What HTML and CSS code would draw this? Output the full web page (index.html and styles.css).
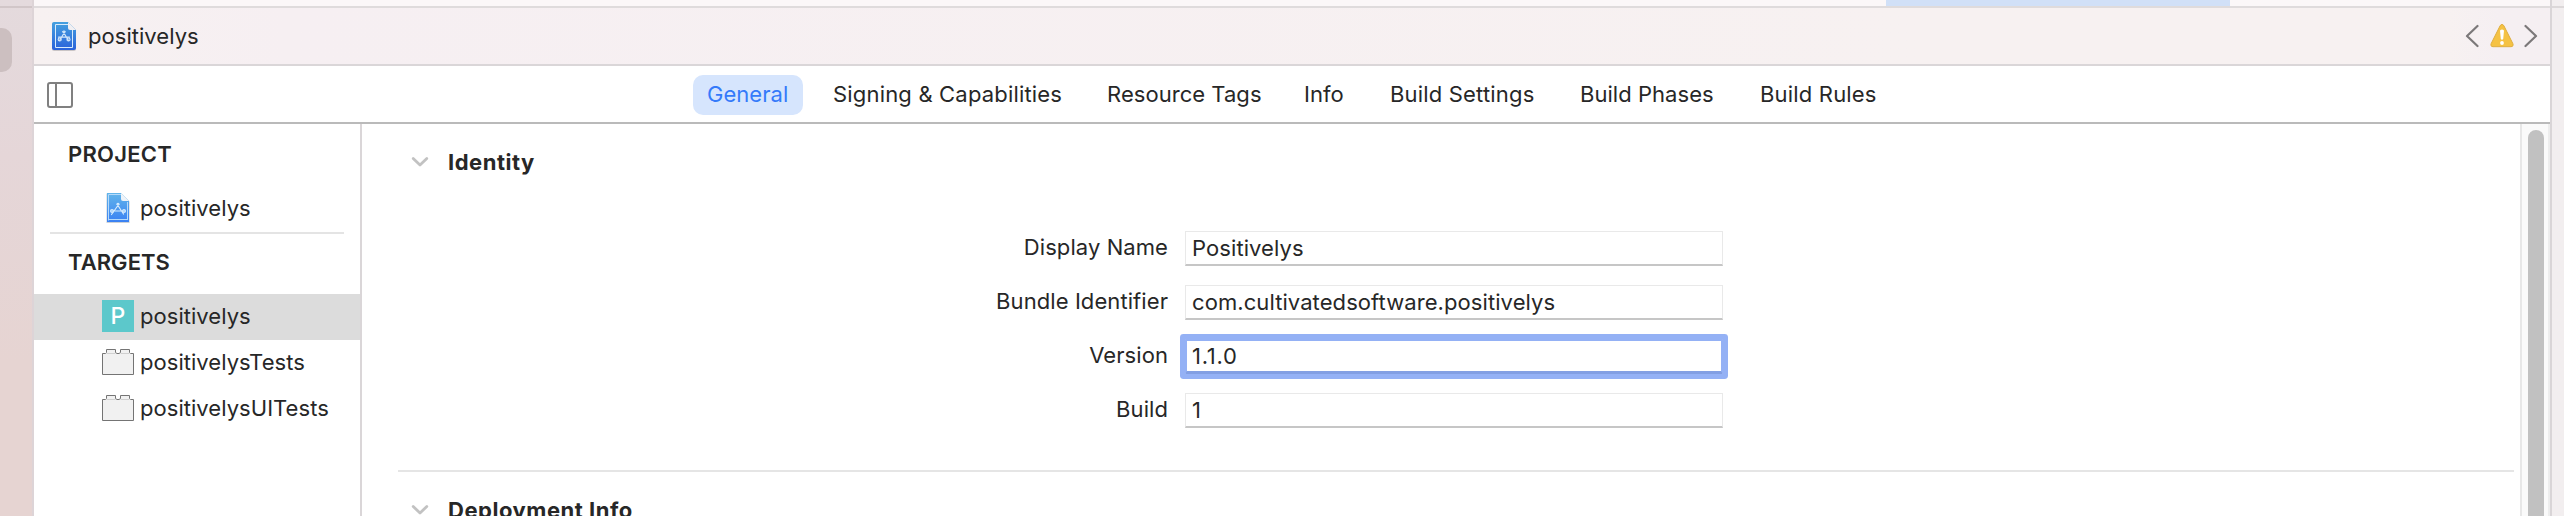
FILE: index.html
```html
<!DOCTYPE html>
<html lang="en">
<head>
<meta charset="utf-8">
<title>positivelys</title>
<link rel="stylesheet" href="styles.css">
</head>
<body>
<div class="window">
  <aside class="edge-left"><div class="edge-cap"></div><div class="edge-nub"></div></aside>
  <main class="editor">
    <div class="file-tabs"><div class="file-tab-active"></div></div>
    <header class="jump-bar">
      <svg class="jump-icon" width="28" height="32" viewBox="0 0 28 32">
        <defs><linearGradient id="docA" x1="0" y1="0" x2="0" y2="1"><stop offset="0" stop-color="#45a0df"/><stop offset="1" stop-color="#2a62da"/></linearGradient></defs>
        <path d="M4 2.6H18L26 10.6V28.5Q26 31 24 31H4Q2 31 2 29V4.600Q2 2.600 4 2.600Z" fill="#000" opacity=".18"/>
        <path d="M4 2H18L26 10V28Q26 30 24 30H4Q2 30 2 28V4Q2 2 4 2Z" fill="url(#docA)"/>
        <path d="M18 2V8Q18 10 20 10H26Z" fill="#f1eff2"/>
        <path d="M18 4.500H5.500V27.500H22.500V10" fill="none" stroke="#d8ebfb" stroke-width="1"/>
        <g fill="none" stroke="#d3e7fa" stroke-width="1.200" stroke-linecap="round"><path d="M13 11.500L18.500 20.500M15 11.500L9.500 20.500M12.500 11.800Q14 10.200 15.300 11.800M8.500 17.200H19.500"/><circle cx="9.700" cy="19.500" r="1.500"/><circle cx="18.500" cy="19.500" r="1.500"/></g>
      </svg>
      <span class="jump-title">positivelys</span>
      <div class="jump-nav">
        <svg width="14" height="24" viewBox="0 0 14 24"><path d="M12.500 2L2 12L12.500 22" class="nav-stroke"/></svg>
        <svg class="warning" width="26" height="26" viewBox="0 0 26 26"><path d="M11.200 2.600Q13 0 14.800 2.600L23.800 20.500Q25 23.500 22 23.700H4Q1 23.500 2.200 20.500Z" fill="#f5c243" stroke="#dfae40" stroke-width="1"/><path d="M11 7.500Q13 5.500 15 7.500L14.200 16Q13 17.500 11.800 16Z" fill="#fff"/><circle cx="13" cy="20" r="1.900" fill="#fff"/></svg>
        <svg width="14" height="24" viewBox="0 0 14 24"><path d="M1.500 2L12 12L1.500 22" class="nav-stroke"/></svg>
      </div>
    </header>
    <nav class="tab-bar">
      <svg class="toggle" width="26" height="26" viewBox="0 0 26 26"><rect x="1" y="1" width="24" height="24" rx="2" fill="none" stroke="#808080" stroke-width="2"/><path d="M9 1V25" stroke="#808080" stroke-width="2"/></svg>
      <div class="tabs">
        <span class="tab active">General</span>
        <span class="tab tab-wide">Signing &amp; Capabilities</span>
        <span class="tab">Resource Tags</span>
        <span class="tab">Info</span>
        <span class="tab tab-wide">Build Settings</span>
        <span class="tab">Build Phases</span>
        <span class="tab tab-wide">Build Rules</span>
      </div>
    </nav>
    <div class="body">
      <section class="sidebar">
        <h2 class="group project">PROJECT</h2>
        <div class="row project-row">
          <span class="icon"><svg width="26" height="32" viewBox="0 0 26 32">
            <defs><linearGradient id="docB" x1="0" y1="0" x2="0" y2="1"><stop offset="0" stop-color="#62b5ea"/><stop offset="1" stop-color="#3a81f3"/></linearGradient></defs>
            <path d="M1.500 1.500H16L24.500 9.500V31H1.500Z" fill="#a9b3bd" opacity=".6"/>
            <path d="M2 1H16L24 9V30H2Z" fill="url(#docB)"/>
            <path d="M16 1V7Q16 9 18 9H24Z" fill="#eef3f8"/>
            <path d="M16 2.500H3.500V28.500M3 27.500H23M22.500 10V28" fill="none" stroke="#b5dafa" stroke-width="1"/>
            <g fill="none" stroke="#d5ebfd" stroke-width="1.200" stroke-linecap="round"><path d="M12 12L18.500 22M14 12L6.500 22.500M11.800 12.300Q13 10.500 14.200 12.300M6 19H20"/><circle cx="7" cy="19" r="1.400"/><circle cx="19" cy="19" r="1.400"/></g>
          </svg></span><span>positivelys</span>
        </div>
        <h2 class="group targets">TARGETS</h2>
        <div class="row selected"><span class="icon app">P</span><span>positivelys</span></div>
        <div class="row"><span class="icon"><svg width="32" height="26" viewBox="0 0 32 26"><path class="brick" d="M.5 25.500V4.500H3.500L4.500 3.500V.5H13.500V3.500L15 4.500H17L18.500 3.500V.5H27.500V3.500L28.500 4.500H31.500V25.500Z"/><path class="brick-edge" d="M4.500 4.500H13.500M18.500 4.500H27.500"/></svg></span><span>positivelysTests</span></div>
        <div class="row"><span class="icon"><svg width="32" height="26" viewBox="0 0 32 26"><path class="brick" d="M.5 25.500V4.500H3.500L4.500 3.500V.5H13.500V3.500L15 4.500H17L18.500 3.500V.5H27.500V3.500L28.500 4.500H31.500V25.500Z"/><path class="brick-edge" d="M4.500 4.500H13.500M18.500 4.500H27.500"/></svg></span><span>positivelysUITests</span></div>
      </section>
      <section class="content">
        <h3 class="section-title"><svg width="18" height="12" viewBox="0 0 18 12"><path class="fold" d="M2.200 2.500L9 9L15.800 2.500"/></svg>Identity</h3>
        <div class="fields">
          <label class="label">Display Name</label><div class="input">Positivelys</div>
          <label class="label">Bundle Identifier</label><div class="input">com.cultivatedsoftware.positivelys</div>
          <label class="label">Version</label><div class="input focused">1.1.0</div>
          <label class="label">Build</label><div class="input">1</div>
        </div>
        <h3 class="section-title"><svg width="18" height="12" viewBox="0 0 18 12"><path class="fold" d="M2.200 2.500L9 9L15.800 2.500"/></svg>Deployment Info</h3>
      </section>
      <div class="scroller"><div class="thumb"></div></div>
    </div>
  </main>
  <aside class="edge-right"><div class="edge-right-cap"></div></aside>
</div>
</body>
</html>
```
FILE: styles.css
```css
* { box-sizing: border-box; }
body { margin: 0; background: #fff; color: #272727; font: 22px/28px "Inter", "Liberation Sans", sans-serif; letter-spacing: .04px; }
svg { display: block; flex: none; }
h2, h3 { margin: 0; font-size: 22px; }
.window { display: grid; grid-template-columns: 34px 1fr 14px; width: 2564px; height: 516px; overflow: hidden; }

.edge-left { background: linear-gradient(#e4dadd, #e5d6d8 30%, #e6d4d2 70%); border-right: 2px solid #ddd4d7; }
.edge-cap { height: 8px; border-bottom: 2px solid #d1c6c8; }
.edge-nub { width: 12px; height: 44px; margin-top: 20px; border-radius: 0 10px 10px 0; background: #ccbfc0; }
.edge-right { background: #f2eeef; border-left: 2px solid #d9d5d7; }
.edge-right-cap { height: 8px; border-bottom: 2px solid #dcd8d9; }

.editor { display: grid; grid-template-rows: 8px 58px 58px 392px; min-width: 0; }
.file-tabs { background: #fbf7f8; border-bottom: 2px solid #dfdbdc; }
.file-tab-active { width: 344px; height: 6px; margin-left: 1852px; background: #d1e0f7; }

.jump-bar { display: flex; align-items: center; padding: 0 12px 0 16px; background: linear-gradient(90deg, #f7f1f1, #f6eff2 10%, #f7f1f1 75%, #f7f1f1 96%, #f5eff2 98%); border-bottom: 2px solid #dad6d8; }
.jump-title { margin-left: 10px; }
.jump-nav { display: flex; align-items: center; gap: 9px; margin-left: auto; }
.warning { margin-left: 1px; }
.nav-stroke { fill: none; stroke: #7b7879; stroke-width: 2.200; stroke-linecap: round; stroke-linejoin: round; }

.tab-bar { display: flex; align-items: center; padding-left: 13px; border-bottom: 2px solid #bababa; }
.toggle { margin-top: 2px; }
.tabs { display: grid; grid-template-columns: 126px 274px 197px 86px 190px 180px auto; justify-items: start; margin-left: 620px; padding-top: 2px; }
.tab { height: 40px; padding: 0 14.5px 0 14px; line-height: 38px; border-radius: 10px; white-space: nowrap; }
.tab-wide { letter-spacing: .18px; }
.active { background: #d6e5fd; color: #347afa; }

.body { display: grid; grid-template-columns: 328px 1fr 30px; }
.sidebar { border-right: 2px solid #dad6d8; }
.group { padding-left: 34px; font-weight: 600; }
.project { line-height: 60px; letter-spacing: .25px; }
.targets { line-height: 56px; margin-bottom: 4px; letter-spacing: .05px; }
.row { display: flex; align-items: center; height: 46px; padding: 0 0 2px 68px; gap: 6px; white-space: nowrap; }
.project-row { height: 50px; margin: 0 16px; padding: 0 0 0 52px; border-bottom: 2px solid #e4e4e4; }
.selected { background: #dcdcdc; }
.icon { display: flex; justify-content: center; align-items: center; width: 32px; height: 32px; flex: none; }
.app { background: #5cc8cb; color: #fff; font-weight: 500; font-size: 23px; }
.brick { fill: #f1f1f1; stroke: #747474; }
.brick-edge { stroke: #d0d0d0; }

.content { min-width: 0; }
.section-title { display: flex; align-items: center; gap: 19px; height: 76px; padding-left: 49px; font-weight: 700; letter-spacing: .52px; }
.section-title svg { margin-top: -1px; }
.fold { fill: none; stroke: #c2c2c2; stroke-width: 2.800; stroke-linecap: round; stroke-linejoin: round; }
.fields { display: grid; grid-template-columns: 770px 538px; grid-auto-rows: 35px; column-gap: 17px; row-gap: 19px; height: 272px; margin: 0 6px 0 36px; padding-top: 31px; border-bottom: 2px solid #e5e5e5; }
.label { text-align: right; line-height: 32px; letter-spacing: .08px; }
.input { border: 1px solid #e9e9e9; border-bottom: 2px solid #c6c6c6; padding-left: 6px; line-height: 32px; letter-spacing: .08px; }
.focused { border: 2px solid #94b1f5; border-bottom: 3px solid #829fe3; padding-left: 5px; line-height: 30px; box-shadow: 0 0 0 5px #94b1f5; border-radius: 1px; letter-spacing: .7px; }

.scroller { padding: 6px 0 0 6px; border-left: 2px solid #e7e7e7; border-right: 2px solid #ededed; background: #fafafa; }
.thumb { width: 16px; height: 400px; border-radius: 8px; background: #c1c1c1; margin-bottom: -14px; }
```
